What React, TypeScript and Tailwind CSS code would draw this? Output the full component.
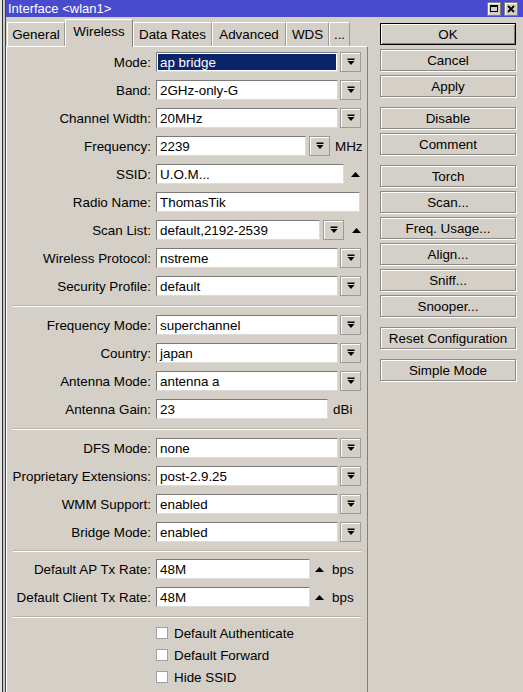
import React from 'react';

const DropIcon = () => (
  <svg width="8" height="8" viewBox="0 0 8 8">
    <rect x="0.5" y="0.5" width="7" height="1.5" fill="#000" />
    <polygon points="0.5,3 7.5,3 4,7" fill="#000" />
  </svg>
);

const UpTri = () => (
  <svg width="9" height="5" viewBox="0 0 9 5">
    <polygon points="0,5 9,5 4.5,0" fill="#000" />
  </svg>
);

function DropBtn({ cls = 'ml-[2px]' }: { cls?: string }) {
  return (
    <div className={`${cls} w-[21px] h-[20px] bg-[#d4d0c8] border border-[#9a9a9a] shadow-[inset_1px_1px_0_#ffffff] flex items-center justify-center`}>
      <DropIcon />
    </div>
  );
}

function Field({ w, value, sel }: { w: string; value: string; sel?: boolean }) {
  return (
    <div className={`${w} h-[20px] bg-white border border-t-[#7a7a7a] border-l-[#7a7a7a] border-r-[#dcdcdc] border-b-[#dcdcdc] flex items-stretch`}>
      {sel ? (
        <div className="flex-1 m-[1px] bg-[#0a246a] text-white flex items-center pl-[2px] pt-[1px] whitespace-nowrap">{value}</div>
      ) : (
        <div className="flex-1 flex items-center pl-[3px] pt-[1px] whitespace-nowrap">{value}</div>
      )}
    </div>
  );
}

function Row({ label, children }: { label: string; children: React.ReactNode }) {
  return (
    <div className="flex items-center h-[20px]">
      <div className="w-[144px] text-right whitespace-nowrap pt-[1px]">{label}:</div>
      <div className="ml-[5px] flex items-center">{children}</div>
    </div>
  );
}

function Select({ label, value, sel }: { label: string; value: string; sel?: boolean }) {
  return (
    <Row label={label}>
      <Field w="w-[182px]" value={value} sel={sel} />
      <DropBtn />
    </Row>
  );
}

function Sep() {
  return <div className="mx-[6px] border-t border-t-[#b8b4ac] border-b border-b-white" />;
}

function Btn({ label, def }: { label: string; def?: boolean }) {
  return (
    <div
      className={`w-[136px] h-[22px] bg-[#d4d0c8] flex items-center justify-center pt-[1px] ${
        def ? 'border border-black shadow-[inset_1px_1px_0_#ffffff,inset_-1px_-1px_0_#808080]' : 'border border-[#8a8a8a] shadow-[inset_1px_1px_0_#ffffff,1px_1px_0_#ffffff]'
      }`}
    >
      {label}
    </div>
  );
}

function Check({ label }: { label: string }) {
  return (
    <div className="flex items-center h-[22px] pl-[149px]">
      <div className="w-[12px] h-[12px] bg-white border border-[#a0a0a0]" />
      <div className="ml-[6px] pt-[1px]">{label}</div>
    </div>
  );
}

function Tab({ label, w, sel }: { label: string; w: string; sel?: boolean }) {
  return sel ? (
    <div className={`${w} h-[28px] -mb-[1px] relative z-10 bg-[#d4d0c8] border-t border-l border-t-white border-l-white border-r border-r-[#808080] flex items-start justify-center pt-[5px]`}>
      {label}
    </div>
  ) : (
    <div className={`${w} h-[24px] bg-[#d4d0c8] border-t border-l border-t-white border-l-white border-r border-r-[#9a9a9a] flex items-start justify-center pt-[5px]`}>
      {label}
    </div>
  );
}

export default function App() {
  return (
    <div className="w-[523px] h-[692px] overflow-hidden flex bg-[#d4d0c8] text-[13.4px] leading-none text-black font-['Liberation_Sans',Arial,sans-serif]">
      {/* background window strip */}
      <div className="w-[6px] h-full flex">
        <div className="w-[2px] bg-[#e4e4e4]" />
        <div className="w-[1px] bg-[#303030]" />
        <div className="w-[2px] bg-[#c8c8c8]" />
        <div className="w-[1px] bg-[#404040]" />
      </div>

      <div className="flex-1 flex flex-col">
        {/* title bar */}
        <div className="h-[17px] bg-[#4a4acd] flex items-center pl-[2px] pr-[5px]">
          <div className="text-white flex-1 text-[13px]">Interface &lt;wlan1&gt;</div>
          <div className="w-[14px] h-[14px] bg-[#d4d0c8] border border-[#808080] shadow-[inset_1px_1px_0_#ffffff] flex items-center justify-center">
            <div className="w-[8px] h-[7px] border border-black border-t-2" />
          </div>
          <div className="ml-[3px] w-[14px] h-[14px] bg-[#d4d0c8] border border-[#808080] shadow-[inset_1px_1px_0_#ffffff] flex items-center justify-center">
            <svg width="8" height="8" viewBox="0 0 8 8">
              <path d="M1 1 L7 7 M7 1 L1 7" stroke="#000" strokeWidth="1.8" />
            </svg>
          </div>
        </div>

        <div className="flex-1 flex">
          {/* left: tabs and panel */}
          <div className="w-[362px] flex flex-col">
            <div className="h-[29px] flex items-end pl-[1px]">
              <Tab label="General" w="w-[58px]" />
              <Tab label="Wireless" w="w-[68px]" sel />
              <Tab label="Data Rates" w="w-[79px]" />
              <Tab label="Advanced" w="w-[74px]" />
              <Tab label="WDS" w="w-[43px]" />
              <Tab label="..." w="w-[21px]" />
            </div>
            <div className="flex-1 border-t border-l border-t-white border-l-white border-r border-r-[#808080] pt-[5px]">
              <div className="flex flex-col gap-[8px]">
                <Select label="Mode" value="ap bridge" sel />
                <Select label="Band" value="2GHz-only-G" />
                <Select label="Channel Width" value="20MHz" />
                <Row label="Frequency">
                  <Field w="w-[150px]" value="2239" />
                  <DropBtn cls="ml-[3px]" />
                  <div className="ml-[5px] pt-[1px]">MHz</div>
                </Row>
                <Row label="SSID">
                  <Field w="w-[188px]" value="U.O.M..." />
                  <div className="ml-[7px]"><UpTri /></div>
                </Row>
                <Row label="Radio Name">
                  <Field w="w-[204px]" value="ThomasTik" />
                </Row>
                <Row label="Scan List">
                  <Field w="w-[164px]" value="default,2192-2539" />
                  <DropBtn cls="ml-[3px]" />
                  <div className="ml-[8px]"><UpTri /></div>
                </Row>
                <Select label="Wireless Protocol" value="nstreme" />
                <Select label="Security Profile" value="default" />
              </div>

              <div className="mt-[9px] mb-[8px]"><Sep /></div>

              <div className="flex flex-col gap-[8px]">
                <Select label="Frequency Mode" value="superchannel" />
                <Select label="Country" value="japan" />
                <Select label="Antenna Mode" value="antenna a" />
                <Row label="Antenna Gain">
                  <Field w="w-[172px]" value="23" />
                  <div className="ml-[5px] pt-[1px]">dBi</div>
                </Row>
              </div>

              <div className="mt-[9px] mb-[8px]"><Sep /></div>

              <div className="flex flex-col gap-[8px]">
                <Select label="DFS Mode" value="none" />
                <Select label="Proprietary Extensions" value="post-2.9.25" />
                <Select label="WMM Support" value="enabled" />
                <Select label="Bridge Mode" value="enabled" />
              </div>

              <div className="mt-[8px] mb-[7px]"><Sep /></div>

              <div className="flex flex-col gap-[8px]">
                <Row label="Default AP Tx Rate">
                  <Field w="w-[154px]" value="48M" />
                  <div className="ml-[5px]"><UpTri /></div>
                  <div className="ml-[8px] pt-[1px]">bps</div>
                </Row>
                <Row label="Default Client Tx Rate">
                  <Field w="w-[154px]" value="48M" />
                  <div className="ml-[5px]"><UpTri /></div>
                  <div className="ml-[8px] pt-[1px]">bps</div>
                </Row>
              </div>

              <div className="mt-[9px] mb-[4px]"><Sep /></div>

              <div className="flex flex-col">
                <Check label="Default Authenticate" />
                <Check label="Default Forward" />
                <Check label="Hide SSID" />
              </div>
            </div>
          </div>

          {/* right: buttons */}
          <div className="ml-[12px] pt-[6px] flex flex-col">
            <div className="flex flex-col gap-[4px]">
              <Btn label="OK" def />
              <Btn label="Cancel" />
              <Btn label="Apply" />
            </div>
            <div className="mt-[10px] flex flex-col gap-[4px]">
              <Btn label="Disable" />
              <Btn label="Comment" />
            </div>
            <div className="mt-[10px] flex flex-col gap-[4px]">
              <Btn label="Torch" />
              <Btn label="Scan..." />
              <Btn label="Freq. Usage..." />
              <Btn label="Align..." />
              <Btn label="Sniff..." />
              <Btn label="Snooper..." />
            </div>
            <div className="mt-[10px]">
              <Btn label="Reset Configuration" />
            </div>
            <div className="mt-[10px]">
              <Btn label="Simple Mode" />
            </div>
          </div>
        </div>
      </div>
    </div>
  );
}
